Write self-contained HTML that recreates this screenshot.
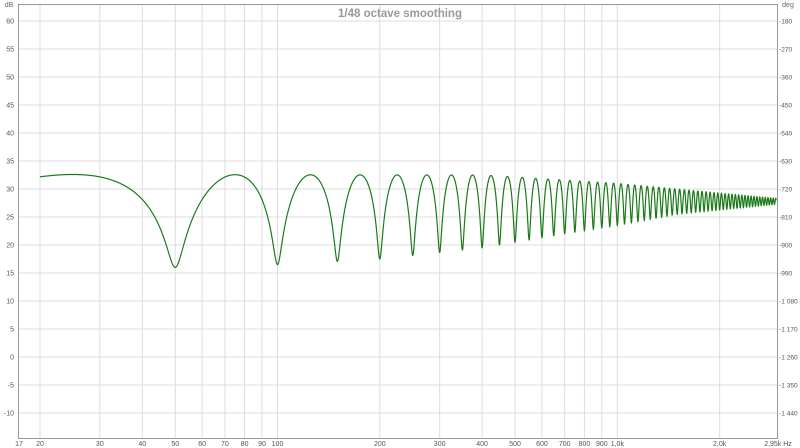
<!DOCTYPE html>
<html><head><meta charset="utf-8"><style>
html,body{margin:0;padding:0;background:#fff;width:800px;height:448px;overflow:hidden}
svg{display:block;font-family:"Liberation Sans",sans-serif}
</style></head><body>
<svg id="s" width="800" height="448" xmlns="http://www.w3.org/2000/svg">
<rect width="800" height="448" fill="#fff"/>
<g id="grid"></g>
<path id="curve" fill="none" stroke="#1a7a1a" stroke-width="1.2"/>
<rect x="18.5" y="4.5" width="759" height="434" fill="none" stroke="#999" stroke-width="1"/>
<text x="400" y="17" text-anchor="middle" font-size="11.5" font-weight="bold" fill="#999">1/48 octave smoothing</text>
<text x="9" y="7" font-size="7" fill="#666" text-anchor="middle">dB</text>
<text x="788" y="7" font-size="7" fill="#666" text-anchor="middle">deg</text>
<g id="labels" font-size="7" fill="#555"></g>
</svg>
<script>
var L=16,R=777,F0=17,F1=2950,LN=Math.log(F1/F0);
function X(f){return L+(R-L)*Math.log(f/F0)/LN;}
function Y(d){return 21+(60-d)*5.6;}
var g='',lb='';
for(var d=60;d>=-10;d-=5){var y=Y(d);
 g+='<line x1="18" x2="777" y1="'+y+'" y2="'+y+'" stroke="#ddd"/>';
 lb+='<text x="14" y="'+(y+2.5)+'" text-anchor="end">'+d+'</text>';
 var s=String(180+(60-d)*18);if(s.length>3)s=s[0]+' '+s.slice(1);
 lb+='<text x="779" y="'+(y+2.5)+'" font-size="6.6">-'+s+'</text>';
}
var fs=[20,30,40,50,60,70,80,90,100,200,300,400,500,600,700,800,900,1000,2000];
fs.forEach(function(f){var x=X(f);g+='<line y1="5" y2="438" x1="'+x+'" x2="'+x+'" stroke="#ddd"/>';
 var t=f>=1000?(f/1000)+',0k':String(f);
 lb+='<text x="'+x+'" y="446" text-anchor="middle">'+t+'</text>';});
lb+='<text x="19" y="446" text-anchor="middle">17</text>';
lb+='<text x="778" y="446" text-anchor="middle">2,95k Hz</text>';
document.getElementById('grid').innerHTML=g;
document.getElementById('labels').innerHTML=lb;
function interp(tab,f){var lf=Math.log(f);
 if(f<=tab[0][0])return tab[0][1];
 for(var i=1;i<tab.length;i++){if(f<=tab[i][0]){var a=Math.log(tab[i-1][0]),b=Math.log(tab[i][0]);
  return tab[i-1][1]+(tab[i][1]-tab[i-1][1])*(lf-a)/(b-a);}}
 return tab[tab.length-1][1];}
var PT=[[20,32.6],[400,32.5],[1000,31],[2950,28.3]];
var NT=[[50,16],[100,16.5],[200,17.5],[400,19.5],[700,22],[1000,23.5],[1500,25.5],[2950,27.3]];
var p='',N=7000;
for(var i=0;i<=N;i++){
 var f=20*Math.pow(F1/20*0.995,i/N);
 var P=interp(PT,f),Nn=interp(NT,f);
 var r=Math.pow(10,(P-Nn)/20),a=(r-1)/(r+1),C=P-20*Math.log10(1+a);
 var ph=2*Math.PI*f/50;
 var re=1-a*Math.cos(ph),im=a*Math.sin(ph);
 var db=C+20*Math.log10(Math.sqrt(re*re+im*im));
 p+=(i?'L':'M')+X(f).toFixed(2)+' '+Y(db).toFixed(2);
}
document.getElementById('curve').setAttribute('d',p);
</script>
</body></html>
